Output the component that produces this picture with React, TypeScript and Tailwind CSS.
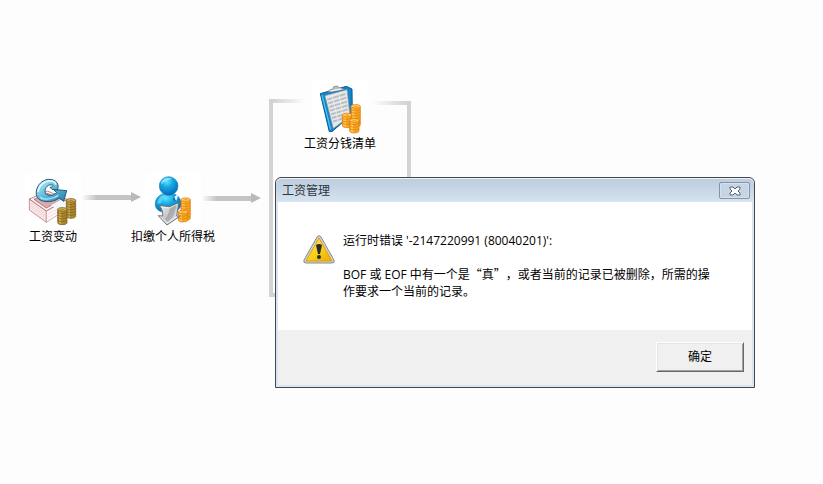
import type { ReactNode } from "react";

function Coins({ x, y, rows, gold }: { x: number; y: number; rows: number; gold?: boolean }) {
  const side = gold ? "#f9a51c" : "#ad8a2c";
  const top = gold ? "#ffcf66" : "#cfb45c";
  const edge = gold ? "#d9750a" : "#75551b";
  const h = rows * 8;

  return (
    <g transform={`translate(${x} ${y})`} stroke={edge} strokeWidth="2">
      <path d={`M0 5v${h}c0 8 28 8 28 0v${-h}z`} fill={side} />
      <path d={`M5 11v${h - 4}M9 12v${h - 4}`} stroke={top} strokeWidth="3" />
      {Array.from({ length: rows - 1 }, (_, i) => (
        <path key={i} d={`M0 ${13 + i * 8}c2 6 26 6 28 0`} fill="none" />
      ))}
      <ellipse cx="14" cy="5" rx="14" ry="5.5" fill={top} />
      <ellipse cx="14" cy="5" rx="7" ry="2" fill={side} stroke="none" />
    </g>
  );
}

function SalaryChangeIcon() {
  return (
    <svg viewBox="15 12 168 162" className="h-[54px] w-14 bg-white" aria-hidden="true">
      <defs>
        <linearGradient id="swirl" x1="0" y1="0" x2="1" y2="1">
          <stop offset="0" stopColor="#c9f2ff" />
          <stop offset=".45" stopColor="#67bfdf" />
          <stop offset="1" stopColor="#1d7da8" />
        </linearGradient>
      </defs>
      <path d="M28 87l51 36v34l-51-37z" fill="#f6e4e4" stroke="#a8666c" strokeWidth="2" />
      <path d="M79 123l62-35v29l-62 40z" fill="#fff7f5" stroke="#b98688" strokeWidth="2" />
      <path d="M31 98l46 33M31 107l46 33M83 133l30-17M83 143l28-16" stroke="#ecd0d2" strokeWidth="2" />
      <path d="M28 87l54-24 59 25-62 35z" fill="#fbeeee" stroke="#8d5960" strokeWidth="2" />
      <path d="M42 88l39-18 44 18-46 26z" fill="#e0a9ad" stroke="#944e58" strokeWidth="2" />
      <path d="M92 106l30-17 24 14-28 18z" fill="#f4f8fa" />
      <path
        d="M112 60C120 43 108 27 86 28C62 30 46 52 49 74C53 96 84 99 105 91L118 84L131 94L140 62L100 58L110 68C98 80 76 78 75 66C74 51 86 42 97 45C102 47 100 51 90 52L96 58Z"
        fill="url(#swirl)"
        stroke="#245c7c"
        strokeWidth="3"
      />
      <path d="M54 66c2-19 18-33 36-33 10 0 16 4 18 11" fill="none" stroke="#e2f8ff" strokeWidth="5" />
      <path d="M60 82c14 9 38 6 55-6" fill="none" stroke="#a7e3f4" strokeWidth="4" />
      <Coins x={139} y={86} rows={6} />
      <Coins x={113} y={113} rows={5} />
    </svg>
  );
}

function IncomeTaxIcon() {
  return (
    <svg viewBox="60 12 168 162" className="h-[54px] w-14 bg-white" aria-hidden="true">
      <defs>
        <radialGradient id="person" cx=".4" cy=".25" r=".8">
          <stop offset="0" stopColor="#69e3ff" />
          <stop offset=".4" stopColor="#13a9e3" />
          <stop offset="1" stopColor="#0862b3" />
        </radialGradient>
        <linearGradient id="arrow" x1="0" y1="0" x2="1" y2="1">
          <stop offset="0" stopColor="#f4f4f4" />
          <stop offset=".5" stopColor="#c6c7c9" />
          <stop offset="1" stopColor="#f5f5f5" />
        </linearGradient>
      </defs>
      <path d="M91 102c0-21 17-33 40-33 24 0 38 15 37 34-1 16-18 25-38 25-22 0-39-7-39-26z" fill="url(#person)" stroke="#117bbb" strokeWidth="2" />
      <path d="M132 72l14 12 9-10 4 4-5 14z" fill="#e8f6fc" />
      <path d="M144 82l6 1 2 12-8-6z" fill="#1d71a7" />
      <circle cx="131" cy="48" r="28" fill="url(#person)" stroke="#1682bc" strokeWidth="2" />
      <path d="M108 43c2-16 18-23 34-16-11 1-24 6-34 16z" fill="#a6efff" opacity=".75" />
      <path d="M97 101c1-15 12-23 25-25-8 8-12 14-14 24z" fill="#62d7fa" opacity=".8" />
      <Coins x={168} y={84} rows={7} gold />
      <Coins x={160} y={121} rows={3} gold />
      <path
        d="M103 107l31 3 28-12-7 40 9 1-38 26-26-28 13 1c1-11-2-22-10-31z"
        fill="url(#arrow)"
        stroke="#707275"
        strokeWidth="3"
      />
      <path d="M134 110l21-8-9 36-18 20-8-12c10-10 14-22 14-36z" fill="#85878a" opacity=".45" />
      <path d="M108 110l25 4 23-11M106 140l20 19 28-18" fill="none" stroke="#fff" strokeWidth="2" />
    </svg>
  );
}

function CashListIcon() {
  return (
    <svg viewBox="36 15 168 162" className="h-[54px] w-14 bg-white" aria-hidden="true">
      <path d="M61 53l78-22 17 8 1 75-60 52-9 1z" fill="#1583c7" stroke="#075b98" strokeWidth="3" />
      <path d="M66 57l26 104" stroke="#48c5f1" strokeWidth="4" />
      <path d="M75 59l66-18 9 80-50 36z" fill="#e6e8ea" stroke="#9a9ea3" strokeWidth="2" />
      <path d="M82 71l54-17M85 82l54-17M88 93l53-16M90 104l53-16M93 115l50-15M96 126l40-12M99 137l28-9" stroke="#b9bcc1" strokeWidth="6" />
      <path d="M97 62l17 73M117 56l13 67" stroke="#f5f5f5" strokeWidth="2" />
      <path d="M83 49l7-8 9-2 2-7 12-2 4 6 12 1 3 4z" fill="#b7bfc4" stroke="#6a747b" strokeWidth="2" />
      <path d="M91 45l33-6" stroke="#eef2f4" strokeWidth="4" />
      <Coins x={153} y={86} rows={7} gold />
      <Coins x={127} y={112} rows={4} gold />
      <Coins x={149} y={128} rows={4} gold />
    </svg>
  );
}

function WarningIcon() {
  return (
    <svg viewBox="0 0 32 29" className="mt-[3px] h-[29px] w-8 shrink-0" role="img" aria-label="警告">
      <defs>
        <linearGradient id="warn" x1="0" y1="0" x2="1" y2="1">
          <stop offset="0" stopColor="#ffe878" />
          <stop offset=".5" stopColor="#fbd21b" />
          <stop offset="1" stopColor="#eda800" />
        </linearGradient>
      </defs>
      <path d="M14 2q2-3 4 0l13 23q1 3-2 3H3q-3 0-2-3z" fill="#cfd1d2" stroke="#8a8a8a" strokeWidth="1" />
      <path d="M16 3l13 23H3z" fill="url(#warn)" stroke="#d9a10b" strokeWidth="1" />
      <path d="M13 10q3-2 6 0l-2 9h-2z" fill="#252a32" />
      <circle cx="16" cy="22" r="2" fill="#252a32" />
    </svg>
  );
}

function FlowNode({ place, label, children }: { place: string; label: string; children: ReactNode }) {
  return (
    <figure className={`absolute flex -translate-x-1/2 flex-col items-center ${place}`}>
      {children}
      <figcaption className="mt-px text-xs leading-4 whitespace-nowrap text-black">{label}</figcaption>
    </figure>
  );
}

function FlowArrow({ place }: { place: string }) {
  return (
    <div className={`absolute flex w-[59px] items-center ${place}`}>
      <div className="h-[5px] flex-1 bg-linear-to-r from-[#fdfdfd] to-[#c4c4c4] to-30%" />
      <div className="border-y-[5px] border-l-10 border-y-transparent border-l-[#b9b9b9]" />
    </div>
  );
}

function ErrorDialog() {
  return (
    <section
      role="alertdialog"
      aria-labelledby="dialog-title"
      aria-describedby="dialog-message"
      className="absolute top-[177px] left-[275px] w-[480px] rounded-t-md border border-[#45484b] bg-[#d8e5f2]"
    >
      <header className="flex h-6 items-center justify-between rounded-t-md border-t border-[#edf2f7] bg-linear-to-b from-[#bccddd] to-[#d6e3f0] pr-1 pl-1.5">
        <h1 id="dialog-title" className="text-xs text-[#30363c]">
          工资管理
        </h1>
        <button
          type="button"
          aria-label="关闭"
          className="flex h-[17px] w-[31px] items-center justify-center rounded-xs border border-[#8493a9] bg-[#c5d5e5] shadow-[inset_0_0_0_1px_#d5e1ed]"
        >
          <svg viewBox="0 0 12 10" className="h-2.5 w-3" aria-hidden="true">
            <path d="M1 1h3l2 2 2-2h3v2L9 5l2 2v2H8L6 7 4 9H1V7l2-2-2-2z" fill="#fff" stroke="#56616f" />
          </svg>
        </button>
      </header>
      <div className="mx-0.5 mb-0.5 bg-[#f0f0f0]">
        <div className="flex h-32 gap-2 bg-white pt-[30px] pr-8 pl-[25px]">
          <WarningIcon />
          <div id="dialog-message" className="font-['Open_Sans','Noto_Sans_CJK_SC',sans-serif] text-xs leading-[17px] text-black [text-spacing-trim:space-all]">
            <p className="mb-[17px]">运行时错误 '-2147220991 (80040201)':</p>
            <p className="w-[375px]">
              BOF 或 EOF 中有一个是
              <span className="font-['Noto_Sans_CJK_SC',sans-serif] leading-none">“真”</span>
              ，或者当前的记录已被删除，所需的操作要求一个当前的记录。
            </p>
          </div>
        </div>
        <footer className="flex justify-end pt-3 pr-2 pb-[13px]">
          <button
            type="button"
            className="h-[30px] w-[88px] border border-t-white border-r-[#696969] border-b-[#696969] border-l-white bg-[#f0f0f0] text-xs text-black shadow-[inset_1px_1px_0_#e3e3e3,inset_-1px_-1px_0_#a0a0a0]"
          >
            确定
          </button>
        </footer>
      </div>
    </section>
  );
}

export default function App() {
  return (
    <main className="relative min-h-screen overflow-hidden bg-[#fdfdfd] font-['Liberation_Sans','Noto_Sans_CJK_SC',sans-serif]">
      <div className="absolute top-[99px] left-[269px] h-[198px] w-9 border-l-4 border-[#d3d3d3]">
        <div className="h-1 bg-linear-to-r from-[#d3d3d3] to-[#fdfdfd]" />
        <div className="mt-[190px] h-1 bg-[#d3d3d3]" />
      </div>
      <div className="absolute top-[101px] left-[372px] h-24 w-[39px] border-r-4 border-[#d3d3d3]">
        <div className="h-1 bg-linear-to-r from-[#fdfdfd] to-[#d3d3d3]" />
      </div>

      <FlowNode place="top-[174px] left-[53px]" label="工资变动">
        <SalaryChangeIcon />
      </FlowNode>
      <FlowArrow place="top-[192px] left-[82px]" />
      <FlowNode place="top-[174px] left-[173px]" label="扣缴个人所得税">
        <IncomeTaxIcon />
      </FlowNode>
      <FlowArrow place="top-[193px] left-[202px]" />
      <FlowNode place="top-[81px] left-[340px]" label="工资分钱清单">
        <CashListIcon />
      </FlowNode>

      <ErrorDialog />
    </main>
  );
}
